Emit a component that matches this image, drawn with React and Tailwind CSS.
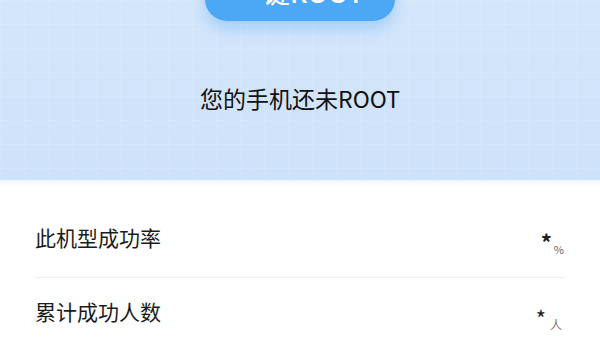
export default function App() {
  const cjk = { fontFamily: '"Noto Sans CJK SC", "Noto Sans", sans-serif' };
  return (
    <div className="w-[600px] h-[340px] overflow-hidden bg-white" style={cjk}>
      <div className="relative h-[180px] flex flex-col items-center bg-[linear-gradient(180deg,#d3e6fb_0%,#d0e3fa_70%,#cde1fa_100%)]">
        <div className="absolute inset-0 bg-[linear-gradient(rgba(255,255,255,0.1)_1px,transparent_1px),linear-gradient(90deg,rgba(255,255,255,0.1)_1px,transparent_1px)] bg-[size:24px_24px]" />
        <div className="relative mt-[-36px] w-[190px] h-[57px] rounded-[22px] bg-[#4ca7f4] shadow-[0_8px_14px_rgba(76,167,244,0.35)] flex items-center justify-center text-white text-[27px] font-medium">
          一键ROOT
        </div>
        <div className="relative mt-[63px] text-[23px] leading-[28px] text-[#111]">您的手机还未ROOT</div>
      </div>
      <div className="h-[6px] bg-[linear-gradient(180deg,#eef6fd,#ffffff)]" />
      <div className="px-[35px]">
        <div className="flex items-center justify-between pt-[39px] pb-[28px]">
          <span className="text-[21px] leading-[24px] text-[#1c1c1c]">此机型成功率</span>
          <span className="flex items-end mr-[1px] translate-y-[4px] text-[#222]">
            <span className="text-[22px] leading-[20px] font-bold">*</span>
            <span className="text-[11px] leading-[12px] text-[#666] ml-[2px] mb-[-4px]">%</span>
          </span>
        </div>
        <div className="h-px bg-[#efefef]" />
        <div className="flex items-center justify-between pt-[21px]">
          <span className="text-[21px] leading-[24px] text-[#1c1c1c]">累计成功人数</span>
          <span className="flex items-end mr-[3px] translate-y-[6px] text-[#222]">
            <span className="text-[22px] leading-[20px]">*</span>
            <span className="text-[12px] leading-[12px] text-[#777] ml-[4px] mb-[-4px]">人</span>
          </span>
        </div>
      </div>
    </div>
  );
}
